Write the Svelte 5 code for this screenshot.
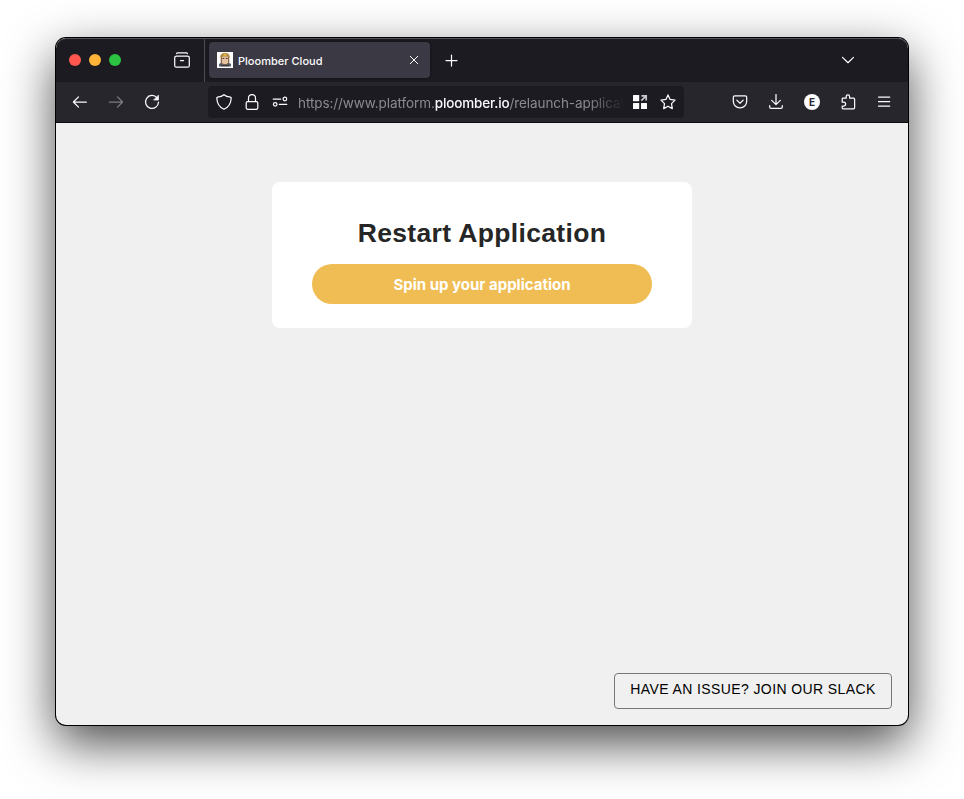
<script>
  const lights = ['#ff5750', '#fdb438', '#2bc341'];
</script>

{#snippet icon(name)}
  <svg class="icon" viewBox="0 0 16 16" fill="none" stroke="currentColor" stroke-width="1.25" stroke-linecap="round" stroke-linejoin="round">
    {#if name === 'view'}
      <path d="M2.6 1.7Q2.8.9 3.8.9H12.2Q13.2.9 13.4 1.7" />
      <rect x=".7" y="4" width="14.6" height="11.2" rx="1.8" />
      <path d="M6.5 8.5h3" />
    {:else if name === 'back'}
      <path d="M14.4 8H1.5M6.5 2.9 1.4 8l5.1 5.1" />
    {:else if name === 'forward'}
      <path d="M1.4 8h13M9.5 2.9 14.6 8l-5.1 5.1" />
    {:else if name === 'reload'}
      <path d="M13 3.8A6.5 6.5 0 1 0 14.5 8.2" />
      <path d="M14.4 1.6v4.4H10z" fill="currentColor" stroke-width=".8" />
    {:else if name === 'shield'}
      <path d="M8 .7C6 2.4 3.8 2.9 1.6 3.2 1 3.3.8 3.7.8 4.2 1.1 9.8 3.8 13.4 8 15.3c4.2-1.9 6.9-5.5 7.2-11.1 0-.5-.2-.9-.8-1C12.2 2.9 10 2.4 8 .7z" />
    {:else if name === 'lock'}
      <rect x="2.2" y="7.5" width="11.6" height="7.9" rx="1.6" />
      <path d="M4.5 7.2V4a3.5 3.5 0 0 1 7 0v3.2" />
    {:else if name === 'permissions'}
      <path d="M1.2 5h7.5M7.3 10.3h7.5" />
      <circle cx="12.9" cy="5" r="1.8" />
      <circle cx="3.2" cy="10.3" r="1.8" />
    {:else if name === 'containers'}
      <g fill="#fbfbfe" stroke="none">
        <rect x="1" y="1" width="6.2" height="6.2" rx=".6" />
        <rect x="1" y="9" width="6.2" height="6" rx=".6" />
        <rect x="9" y="9" width="6" height="6" rx=".6" />
      </g>
      <path d="M9.3 6.7 13.8 2.2M9.4 1.8h4.8v4.8" stroke="#c7c7cc" stroke-width="1.7" stroke-linecap="butt" stroke-linejoin="miter" />
    {:else if name === 'star'}
      <path d="M8 .9l2.1 4.5 4.9.7-3.5 3.5.8 5L8 12.2l-4.3 2.4.8-5L1 6.1l4.9-.7z" />
    {:else if name === 'pocket'}
      <path d="M2.8 1.9h10.4q1.5 0 1.5 1.5v3.8a6.7 6.7 0 0 1-13.4 0V3.4q0-1.5 1.5-1.5z" />
      <path d="M4.8 6.1 8 9.2l3.2-3.1" />
    {:else if name === 'download'}
      <path d="M8 .5v10M3.7 6.4 8 10.6l4.3-4.2M1.7 11.6v1.3q0 1.4 1.4 1.4h9.8q1.4 0 1.4-1.4v-1.3" />
    {:else if name === 'extensions'}
      <path d="M2.2 7V5q0-.8.8-.8h3.2V2.5a1.7 1.7 0 0 1 3.4 0v1.7h4q1 0 1 1v8.6q0 1-1 1H3q-.8 0-.8-.8v-2h1.5a1.7 1.7 0 0 0 0-3.8H2.2z" />
    {:else if name === 'menu'}
      <path d="M2.5 3h11.2M2.5 7.5h11.2M2.5 12h11.2" />
    {:else if name === 'close'}
      <path d="m4.2 4.2 7.6 7.6M11.8 4.2l-7.6 7.6" stroke-width="1" />
    {:else if name === 'plus'}
      <path d="M7.5 3v11M2 8.5h11" />
    {:else if name === 'chevron'}
      <path d="M2.5 5.4 8 10.7l5.5-5.3" />
    {/if}
  </svg>
{/snippet}

<div class="desktop">
  <div class="window">
    <header class="tabs">
      <div class="lights">
        {#each lights as color}
          <i style="background: {color}"></i>
        {/each}
      </div>
      <div class="view">{@render icon('view')}</div>
      <div class="tab">
        <svg class="favicon" viewBox="0 0 16 16">
          <rect width="16" height="16" fill="#fff" />
          <path d="M2 12q2-2 6-2t6 2v2.5H2z" fill="#58606b" />
          <path d="M3.7 5h8.6v5.2L10.5 13h-5l-1.8-2.8z" fill="#8b684b" />
          <path d="M5 5h6v5.7L9.5 12h-3L5 10.7z" fill="#e5c3a0" />
          <path d="M3 5.6Q3.4 1 8 .8q4.6.2 5 4.8L10.5 4.8H6z" fill="#b38a45" />
          <path d="M6.5 1.4h3v2.5h-3z" fill="#dcae48" />
          <path d="M5.5 6.4h1.8M8.8 6.4h1.8" stroke="#40322c" />
          <path d="M4 13.5h8" stroke="#343b46" stroke-width="1.5" />
        </svg>
        <span class="title">Ploomber Cloud</span>
        {@render icon('close')}
      </div>
      <div class="plus">{@render icon('plus')}</div>
      <div class="chevron">{@render icon('chevron')}</div>
    </header>

    <nav class="toolbar">
      <div class="group">
        {@render icon('back')}
        <span class="dim">{@render icon('forward')}</span>
        {@render icon('reload')}
      </div>
      <div class="urlbar">
        <div class="site">
          {@render icon('shield')}
          {@render icon('lock')}
          {@render icon('permissions')}
        </div>
        <div class="url">https://www.platform.<b>ploomber.io</b>/relaunch-applicat</div>
        <div class="site">
          {@render icon('containers')}
          {@render icon('star')}
        </div>
      </div>
      <div class="group actions">
        {@render icon('pocket')}
        {@render icon('download')}
        <span class="account">E</span>
        {@render icon('extensions')}
        {@render icon('menu')}
      </div>
    </nav>

    <main>
      <section class="card">
        <h1>Restart Application</h1>
        <button class="primary">Spin up your application</button>
      </section>
      <button class="slack">HAVE AN ISSUE? JOIN OUR SLACK</button>
    </main>
  </div>
</div>

<style>
  :global(body) {
    background: #fff;
  }
  .desktop {
    box-sizing: border-box;
    width: 964px;
    height: 799px;
    padding: 38px 56px 74px;
    overflow: hidden;
  }
  .window {
    display: flex;
    flex-direction: column;
    height: 687px;
    border-radius: 10px;
    overflow: hidden;
    background: #f0f0f0;
    box-shadow: 0 0 0 1px #000, 0 18px 50px rgba(0, 0, 0, 0.72);
    font-family: Inter, 'Liberation Sans', sans-serif;
  }
  .icon {
    display: block;
    flex: none;
    width: 16px;
    height: 16px;
    color: #fbfbfe;
  }
  .tabs {
    display: flex;
    align-items: center;
    box-sizing: border-box;
    height: 44px;
    background: #1c1b22;
    box-shadow: inset 0 1px #535258;
    border-radius: 10px 10px 0 0;
  }
  .lights {
    display: flex;
    gap: 8px;
    padding-left: 13px;
  }
  .lights i {
    width: 12px;
    height: 12px;
    border-radius: 50%;
  }
  .view {
    display: flex;
    align-items: center;
    height: 44px;
    margin-left: 53px;
    padding-right: 14px;
    border-right: 1px solid #4b4a50;
  }
  .tab {
    display: flex;
    align-items: center;
    box-sizing: border-box;
    width: 221px;
    height: 36px;
    margin-left: 4px;
    padding: 0 8px;
    border-radius: 4px;
    background: #3b3943;
    box-shadow: 0 0 3px rgba(0, 0, 0, 0.5);
  }
  .favicon {
    width: 16px;
    height: 16px;
  }
  .title {
    flex: 1;
    margin-left: 5px;
    padding-top: 2px;
    color: #fbfbfe;
    font-size: 11px;
    font-weight: 500;
    letter-spacing: 0.02px;
    white-space: nowrap;
  }
  .plus {
    margin-left: 14px;
  }
  .chevron {
    margin-left: auto;
    padding-right: 52px;
  }
  .toolbar {
    display: flex;
    align-items: center;
    box-sizing: border-box;
    height: 41px;
    padding: 0 16px;
    background: #27262d;
    border-bottom: 1px solid #0c0c0d;
  }
  .group {
    display: flex;
    gap: 20px;
  }
  .group .icon {
    margin-top: 0.5px;
  }
  .dim {
    opacity: 0.4;
  }
  .urlbar {
    display: flex;
    align-items: center;
    box-sizing: border-box;
    width: 476px;
    height: 32px;
    margin-left: 48px;
    padding: 0 8px;
    border-radius: 4px;
    background: #1c1b22;
  }
  .site {
    display: flex;
    gap: 12px;
  }
  .url {
    width: 326px;
    margin: 0 8px 0 10px;
    padding-top: 2px;
    overflow: hidden;
    color: #8b8a91;
    font-size: 13.5px;
    letter-spacing: -0.08px;
    line-height: 20px;
    white-space: nowrap;
    mask-image: linear-gradient(to left, transparent, #000 36px);
  }
  .url b {
    color: #fbfbfe;
    font-weight: 500;
    letter-spacing: -0.15px;
  }
  .actions {
    margin-left: auto;
  }
  .account {
    width: 16px;
    height: 16px;
    border-radius: 50%;
    background: #fbfbfe;
    color: #27262d;
    font-size: 10px;
    font-weight: 700;
    line-height: 16px;
    text-align: center;
  }
  main {
    display: flex;
    flex: 1;
    flex-direction: column;
    align-items: center;
    padding: 59px 16px 16px;
  }
  .card {
    box-sizing: border-box;
    width: 420px;
    height: 146px;
    padding: 34px 40px 24px;
    border-radius: 8px;
    background: #fff;
  }
  h1 {
    margin: 0 0 14px;
    color: #262626;
    font: 700 26.5px/34px 'Liberation Sans', Arial, sans-serif;
    letter-spacing: 0.35px;
    text-align: center;
    white-space: nowrap;
  }
  button {
    display: block;
    padding: 0;
  }
  .primary {
    width: 340px;
    height: 40px;
    padding-top: 1px;
    border: 0;
    border-radius: 20px;
    background: #f0bd54;
    color: #fff;
    font: 700 15px/39px Inter, sans-serif;
  }
  .slack {
    box-sizing: border-box;
    width: 278px;
    height: 36px;
    margin-top: auto;
    align-self: flex-end;
    padding-bottom: 4px;
    border: 1px solid #777;
    border-radius: 4px;
    background: #f0f0f0;
    color: #000;
    font: 14px/20px 'Liberation Sans', Arial, sans-serif;
    letter-spacing: 0.4px;
    white-space: nowrap;
  }
</style>
